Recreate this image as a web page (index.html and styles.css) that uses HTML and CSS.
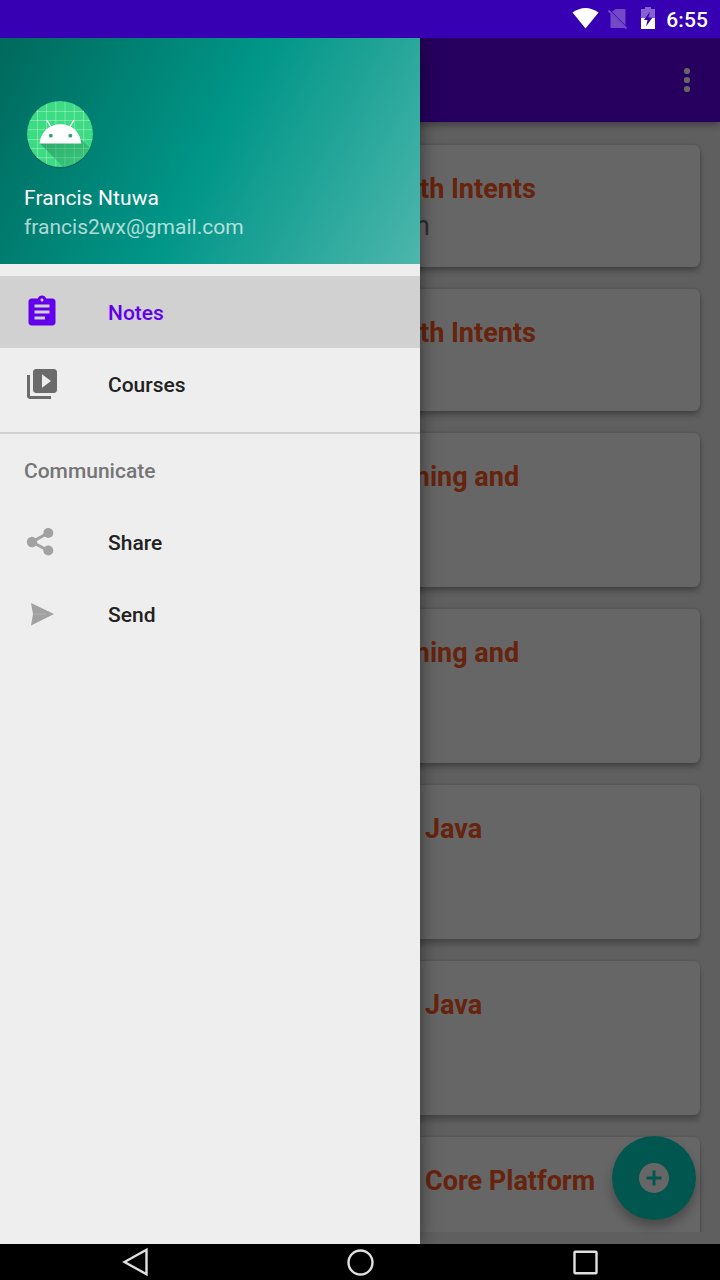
FILE: index.html
```html
<!DOCTYPE html>
<html lang="en">
<head>
<meta charset="utf-8">
<title>Notes</title>
<link rel="stylesheet" href="styles.css">
</head>
<body>
<div class="screen">
  <header class="status">
    <svg class="status-icons" width="90" height="38" viewBox="0 0 90 38">
      <path d="M2.500 12.500Q15.500 3.500 28.500 12.500L15.500 28.500Z" fill="#fff"/>
      <path d="M45.500 9H54.500a1 1 0 0 1 1 1v15.200L42 11.700ZM40.500 13.200L55.300 28H41.500a1 1 0 0 1-1-1Z" fill="#7349c8"/>
      <path d="M38.500 10.500L56.500 28.500" stroke="#7349c8" stroke-width="1.800"/>
      <path d="M71 9h4V7h6v2h4v9H71Z" fill="#8762d1"/>
      <path d="M71 18h14v11H71Z" fill="#fff"/>
      <path d="M80 11.500L74 20h3.500L76 26.500L82.500 17.500H78.500Z" fill="#3700b3"/>
    </svg>
    <span class="clock">6:55</span>
  </header>

  <div class="stage">
    <main class="app">
      <div class="toolbar">
        <svg width="8" height="26" viewBox="0 0 8 26" fill="#fff"><circle cx="4" cy="4" r="3.100"/><circle cx="4" cy="13" r="3.100"/><circle cx="4" cy="22" r="3.100"/></svg>
      </div>
      <div class="list">
        <article class="card short"><h2 class="title intents">th Intents</h2><p class="note">n</p></article>
        <article class="card short"><h2 class="title intents">th Intents</h2></article>
        <article class="card"><h2 class="title async">ming and</h2></article>
        <article class="card"><h2 class="title async">ming and</h2></article>
        <article class="card low"><h2 class="title">Java</h2></article>
        <article class="card low"><h2 class="title">Java</h2></article>
        <article class="card low"><h2 class="title">Core Platform</h2></article>
      </div>
      <div class="fab">
        <svg width="30" height="30" viewBox="0 0 30 30"><circle cx="15" cy="15" r="15" fill="#fff"/><path d="M15 7.500v15M7.500 15h15" stroke="#03dac5" stroke-width="3"/></svg>
      </div>
    </main>
    <div class="scrim"></div>

    <aside class="drawer">
      <div class="profile">
        <svg class="avatar" width="72" height="72" viewBox="0 0 72 72">
          <defs>
            <clipPath id="disc"><circle cx="36" cy="36" r="33"/></clipPath>
            <linearGradient id="shade" x1="0" y1="0" x2="1" y2="1"><stop offset="0" stop-color="#16724a" stop-opacity=".5"/><stop offset="1" stop-color="#16724a" stop-opacity=".1"/></linearGradient>
          </defs>
          <circle cx="36" cy="37.200" r="33.200" fill="#00564e" opacity=".55"/>
          <g clip-path="url(#disc)">
            <path d="M0 0h72v72H0Z" fill="#3ddc84"/>
            <path d="M13.500 0v72M22.500 0v72M31.800 0v72M41 0v72M50.300 0v72M59.500 0v72M0 13.500h72M0 22.500h72M0 31.700h72M0 41.500h72M0 50.500h72M0 59.700h72" stroke="#fff" stroke-opacity=".38" stroke-width=".8"/>
            <path d="M15.500 45L42 72H72V56L57 41Z" fill="url(#shade)"/>
          </g>
          <path d="M15.500 45.500C17 34 25 26.300 36.500 26.300S56 34 57.300 45.500Z" fill="#fff"/>
          <path d="M26.700 28.500L22.700 22M46 28.500L50 22" stroke="#fff" stroke-width="1.400"/>
          <circle cx="26.800" cy="37.700" r="1.900" fill="#2da566"/><circle cx="46.300" cy="37.700" r="1.900" fill="#2da566"/>
        </svg>
        <div class="name">Francis Ntuwa</div>
        <div class="email">francis2wx@gmail.com</div>
      </div>
      <nav class="menu">
        <div class="item active">
          <svg width="36" height="36" viewBox="0 0 24 24" fill="#6200ee"><path d="M19 3h-4.180C14.400 1.840 13.300 1 12 1c-1.300 0-2.400.84-2.820 2H5c-1.100 0-2 .9-2 2v14c0 1.100.9 2 2 2h14c1.100 0 2-.9 2-2V5c0-1.100-.9-2-2-2zm-7 0c.55 0 1 .45 1 1s-.45 1-1 1-1-.45-1-1 .45-1 1-1zm2 14H7v-2h7v2zm3-4H7v-2h10v2zm0-4H7V7h10v2z"/></svg>
          <span>Notes</span>
        </div>
        <div class="item">
          <svg width="36" height="36" viewBox="0 0 24 24" fill="#6b6b6b"><path d="M4 6H2v14c0 1.100.9 2 2 2h14v-2H4V6zm16-4H8c-1.100 0-2 .9-2 2v12c0 1.100.9 2 2 2h12c1.100 0 2-.9 2-2V4c0-1.100-.9-2-2-2zm-8 12.500v-9l6 4.500-6 4.500z"/></svg>
          <span>Courses</span>
        </div>
        <div class="group">Communicate</div>
        <div class="item">
          <svg width="36" height="36" viewBox="0 0 36 36" fill="#a1a1a1"><path d="M24 9L8 18L24 26.500" fill="none" stroke="#a1a1a1" stroke-width="3"/><circle cx="24.300" cy="9" r="5"/><circle cx="8" cy="18" r="5.200"/><circle cx="24.300" cy="26.500" r="5"/></svg>
          <span>Share</span>
        </div>
        <div class="item">
          <svg width="36" height="36" viewBox="0 0 36 36"><path d="M7 7L30 18L7 29.500L9 18Z" fill="#a1a1a1"/><path d="M9 18H22" stroke="#b0b0b0"/></svg>
          <span>Send</span>
        </div>
      </nav>
    </aside>
  </div>

  <footer class="navbar">
    <svg width="36" height="36" viewBox="0 0 36 36"><path d="M7.500 18L29.500 5.800V30.200Z"/></svg>
    <svg width="36" height="36" viewBox="0 0 36 36"><circle cx="18.500" cy="18.500" r="12"/></svg>
    <svg width="36" height="36" viewBox="0 0 36 36"><rect x="7.500" y="7.700" width="22" height="21.500" rx=".8"/></svg>
  </footer>
</div>
</body>
</html>
```
FILE: styles.css
```css
* { box-sizing: border-box; }
body { margin: 0; font-family: Roboto, sans-serif; }
.screen {
  width: 720px;
  height: 1280px;
  display: grid;
  grid-template-rows: 38px 1206px 36px;
  overflow: hidden;
}

.status {
  display: flex;
  justify-content: flex-end;
  align-items: center;
  padding-right: 12px;
  background: #3700b3;
  color: #fff;
}
.status-icons { margin-right: 6px; }
.clock { font-size: 21px; line-height: 38px; font-weight: 500; letter-spacing: .1px; padding-top: 2px; }

.stage { position: relative; overflow: hidden; background: #eee; }
.app { height: 100%; display: flex; flex-direction: column; }
.toolbar {
  height: 84px;
  flex: none;
  display: flex;
  align-items: center;
  justify-content: flex-end;
  padding-right: 29px;
  background: #6200ee;
  box-shadow: 0 2px 8px rgba(0, 0, 0, .4);
  z-index: 1;
}
.list {
  height: 1110px;
  flex: none;
  display: flex;
  flex-direction: column;
  gap: 22px;
  padding: 23px 20px 0;
  overflow: hidden;
}
.card {
  flex: none;
  height: 154px;
  padding: 27px 20px 0 405px;
  background: #fff;
  border-radius: 6px;
  box-shadow: 0 4px 6px rgba(0, 0, 0, .28), 0 0 3px rgba(0, 0, 0, .2);
}
.card.short { height: 122px; }
.card.low { box-shadow: 0 6px 5px rgba(0, 0, 0, .2), 0 0 3px rgba(0, 0, 0, .2); }
.title { margin: 0; font-size: 27px; line-height: 34px; font-weight: 700; color: #ff5722; white-space: nowrap; }
.title.intents { margin-left: -5px; }
.title.async { margin-left: -18.5px; }
.note { margin: 2px 0 0 -10px; font-size: 27px; line-height: 36px; color: #737373; }

.fab {
  position: absolute;
  right: 24px;
  bottom: 24px;
  width: 84px;
  height: 84px;
  display: grid;
  place-items: center;
  border-radius: 50%;
  background: #03dac5;
  box-shadow: 0 7px 11px rgba(0, 0, 0, .28);
  z-index: 1;
}
.scrim { position: absolute; inset: 0; background: rgba(0, 0, 0, .6); z-index: 2; }

.drawer {
  position: absolute;
  inset: 0 auto 0 0;
  width: 420px;
  background: #eee;
  box-shadow: 0 0 18px rgba(0, 0, 0, .5);
  z-index: 3;
}
.profile {
  height: 226px;
  padding: 60px 24px 0;
  background: linear-gradient(118.3deg, #00695c, #009688 50%, #4db6ac);
  color: #fff;
  font-size: 21px;
}
.avatar { display: block; }
.name { margin-top: 14px; line-height: 28px; font-size: 21px; letter-spacing: .1px; }
.email { line-height: 30px; color: rgba(255, 255, 255, .7); }

.menu { padding-top: 12px; font-size: 21px; font-weight: 500; color: #212121; }
.item { height: 72px; display: flex; align-items: center; gap: 48px; padding-left: 24px; }
.item span { padding-top: 1px; }
.item.active { background: #d1d1d1; color: #6200ee; }
.group {
  height: 74px;
  margin-top: 12px;
  padding-left: 24px;
  border-top: 2px solid #d1d1d1;
  line-height: 74px;
  color: #757575;
}

.navbar {
  display: flex;
  justify-content: space-between;
  padding: 0 117px;
  background: #000;
}
.navbar svg { fill: none; stroke: #e0e0e0; stroke-width: 2.4; }
```
